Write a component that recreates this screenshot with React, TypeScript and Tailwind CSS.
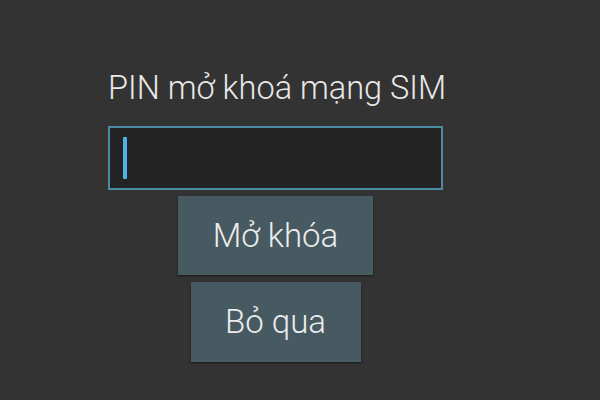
import React from 'react';

export default function App() {
  return (
    <div className="w-[600px] h-[400px] bg-[#333333] overflow-hidden" style={{ fontFamily: 'Roboto, sans-serif' }}>
      <div className="ml-[108px] w-[335px] flex flex-col items-center pt-[67px]">
        {/* Title */}
        <div className="w-full text-[32.5px] leading-[42px] text-[#e8e8e8] font-light whitespace-nowrap">
          PIN mở khoá mạng SIM
        </div>

        {/* PIN input */}
        <div className="mt-[17px] w-full h-[64px] bg-[#232323] border-2 border-[#4b8ca3] flex items-center pl-[13px]">
          <div className="w-[4px] h-[42px] bg-[#4fb3ea] rounded-[1px]" />
        </div>

        {/* Buttons */}
        <button className="mt-[6px] w-[195px] h-[79px] bg-[#475a62] text-[33px] text-[#ececec] font-light shadow-[0_1px_2px_rgba(0,0,0,0.5)]">
          Mở khóa
        </button>
        <button className="mt-[7px] w-[170px] h-[80px] bg-[#475a62] text-[33px] text-[#ececec] font-light shadow-[0_1px_2px_rgba(0,0,0,0.5)]">
          Bỏ qua
        </button>
      </div>
    </div>
  );
}
